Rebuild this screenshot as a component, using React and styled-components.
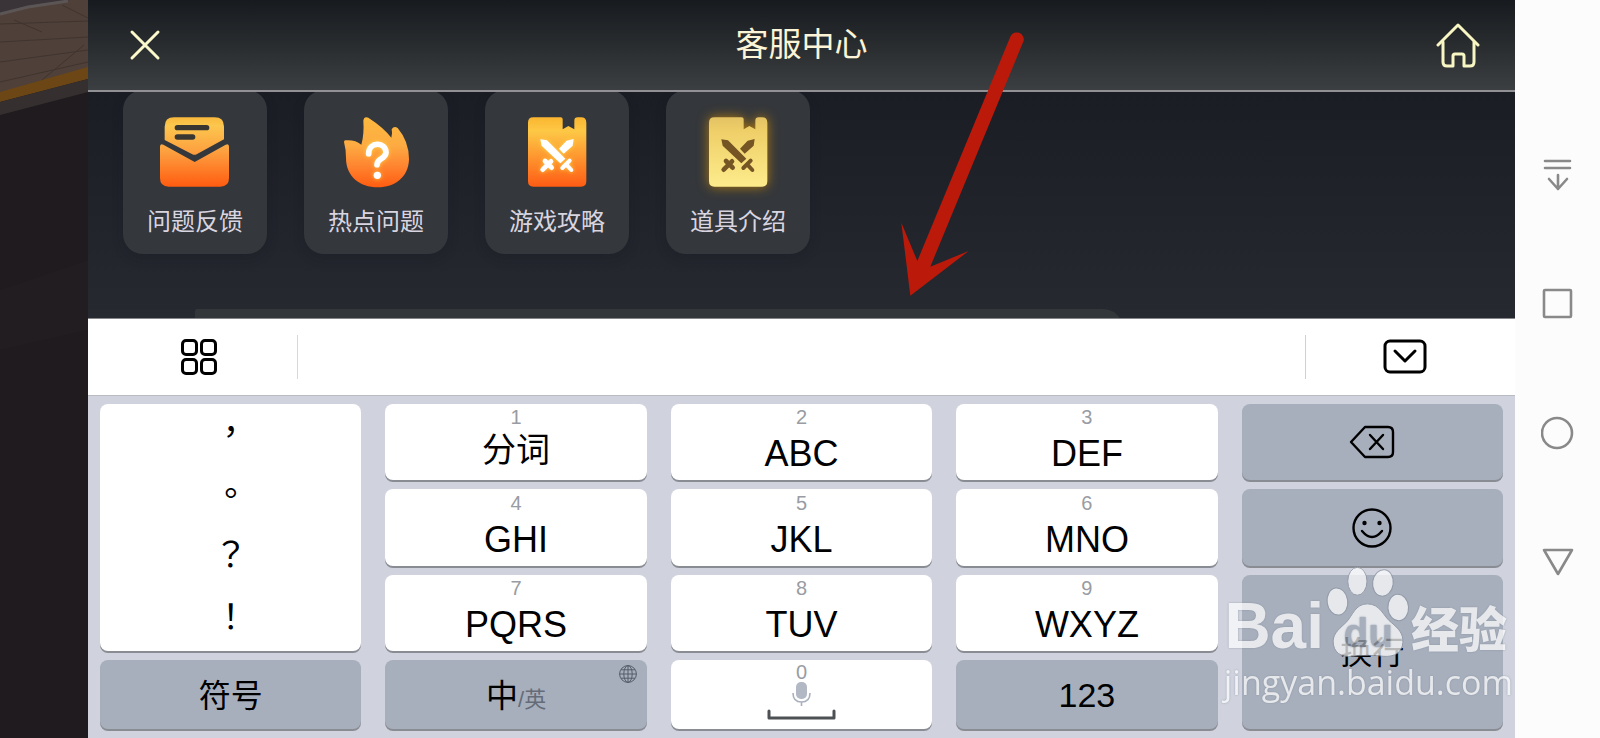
import React from "react";
import styled, { createGlobalStyle, css } from 'styled-components'

const keys = [
    { hint: '1', text: '分词', cn: true, area: 'k1' },
    { hint: '2', text: 'ABC', area: 'k2' },
    { hint: '3', text: 'DEF', area: 'k3' },
    { hint: '4', text: 'GHI', area: 'k4' },
    { hint: '5', text: 'JKL', area: 'k5' },
    { hint: '6', text: 'MNO', area: 'k6' },
    { hint: '7', text: 'PQRS', area: 'k7' },
    { hint: '8', text: 'TUV', area: 'k8' },
    { hint: '9', text: 'WXYZ', area: 'k9' },
]

const marks = ['，', '。', '？', '！']

const FeedbackIcon = () => (
    <CardIcon viewBox="477 348 216 216">
        <defs>
            <linearGradient id="mail" gradientUnits="userSpaceOnUse" x1="0" y1="352" x2="0" y2="560">
                <stop offset="0" stopColor="#f9b93c" />
                <stop offset="0.12" stopColor="#fcc74e" />
                <stop offset="0.5" stopColor="#fd9f3f" />
                <stop offset="1" stopColor="#ff5c10" />
            </linearGradient>
        </defs>
        <path fill="url(#mail)" d="M494 420V380Q494 352 522 352H644Q672 352 672 380V418L590 463Q583 466 577 463Z" />
        <path fill="url(#mail)" d="M480 440Q480 429 490 434L584 486L677 434Q687 429 687 440V534Q687 560 661 560H506Q480 560 480 534Z" />
        <path stroke="#3a3733" strokeWidth="16" strokeLinecap="round" d="M532 383H620M532 411H578" />
    </CardIcon>
)

const HotIcon = () => (
    <CardIcon viewBox="1018 346 216 216">
        <defs>
            <linearGradient id="fire" x1="0" y1="0" x2="0" y2="1">
                <stop offset="0" stopColor="#fcb93e" />
                <stop offset="0.4" stopColor="#fdab42" />
                <stop offset="0.7" stopColor="#ff8430" />
                <stop offset="1" stopColor="#ff5c10" />
            </linearGradient>
            <filter id="glow" x="-40%" y="-40%" width="180%" height="180%">
                <feDropShadow dx="0" dy="0" stdDeviation="7" floodColor="#ffd23e" />
            </filter>
        </defs>
        <path fill="url(#fire)" d="M1034 419Q1062 416 1082 432Q1091 400 1088 360Q1090 346 1103 351Q1148 380 1172 411Q1176 397 1173 386Q1180 374 1191 382Q1225 422 1225 476C1224 530 1182 560 1132 560C1076 560 1036 526 1036 472Q1036 446 1030 424Q1030 420 1034 419Z" />
        <g filter="url(#glow)">
            <path fill="none" stroke="#fff" strokeWidth="17" strokeLinecap="round" d="M1104 459C1104 422 1156 422 1156 456C1155 476 1129 472 1129 492" />
            <circle cx="1130" cy="524" r="11" fill="#fff" />
        </g>
    </CardIcon>
)

const BookIcon = ({ id, from, mid, to, sword, lit }) => (
    <CardIcon viewBox="180 108 216 216" $lit={lit}>
        <defs>
            <linearGradient id={id} x1="0" y1="0" x2="0" y2="1">
                <stop offset="0" stopColor={from} />
                <stop offset="0.2" stopColor={mid} />
                <stop offset="1" stopColor={to} />
            </linearGradient>
        </defs>
        <path fill={`url(#${id})`} d="M217 112H299Q305 112 305 118V148L322 138L340 148V122Q340 112 350 112H360Q376 112 376 128V304Q376 320 360 320H217Q201 320 201 304V128Q201 112 217 112Z" />
        <g filter={lit ? undefined : 'url(#glow)'}>
            <path fill={sword} d="M238 178L258 181L313 236L298 250L242 197ZM338 177L335 197L308 221L294 206L317 182Z" />
            <path stroke={sword} strokeWidth="12" strokeLinecap="round" d="M326 242L304 264M316 254L331 270" />
            <path stroke={sword} strokeWidth="14" strokeLinecap="round" d="M252 243L272 263M270 244L245 269" />
        </g>
    </CardIcon>
)

const PawIcon = () => (
    <Paw viewBox="370 80 261 280">
        <g fill="#fff" stroke="#8b93a0" strokeWidth="3">
            <ellipse cx="410" cy="187" rx="31" ry="41" transform="rotate(-8 410 187)" />
            <ellipse cx="470" cy="126" rx="29" ry="42" />
            <ellipse cx="547" cy="131" rx="31" ry="40" transform="rotate(8 547 131)" />
            <ellipse cx="593" cy="205" rx="31" ry="40" transform="rotate(-4 593 205)" />
            <path d="M500 194C540 194 548 232 572 250C596 270 608 284 607 310C605 342 580 354 550 352C520 348 486 348 456 352C420 356 397 340 397 306C398 280 420 266 438 248C456 228 464 194 500 194Z" />
        </g>
        <text x="503" y="324" textAnchor="middle" fontSize="122" fontWeight="700" fontFamily="Liberation Sans, sans-serif" fill="#a7afbd">du</text>
    </Paw>
)

const cards = [
    { name: '问题反馈', icon: <FeedbackIcon /> },
    { name: '热点问题', icon: <HotIcon /> },
    { name: '游戏攻略', icon: <BookIcon id="guide" from="#fbb62f" mid="#fdc846" to="#ff5c14" sword="#fff" /> },
    { name: '道具介绍', icon: <BookIcon id="props" from="#e3c264" mid="#efcf68" to="#fdec8c" sword="#765524" lit /> },
]

const App = () => {
    return (
        <Page>
            <Global />
            <Scene viewBox="0 0 88 738" preserveAspectRatio="none">
                <rect width="88" height="738" fill="#1f1b1f" />
                <path fill="#4f4039" d="M0 0H88V70L0 100Z" />
                <path fill="#3a3338" d="M0 0H70L40 4L0 14Z" />
                <path stroke="#5c5555" strokeWidth="3" d="M0 14L28 7L68 1" fill="none" />
                <path stroke="#40342f" fill="none" d="M0 24L88 21M0 42L88 37M0 62L88 50M0 82L88 62M14 20L42 32M62 5L88 18M84 45L42 80" />
                <path fill="#6c4715" d="M0 92L88 67V79L0 102Z" />
                <path fill="#35302f" d="M0 102L88 79V92L0 115Z" />
                <path fill="#211d20" d="M0 290L88 260V330L0 350Z" />
            </Scene>
            <Screen>
                <Header>
                    <HeaderButton aria-label="关闭">
                        <svg width="32" height="32" viewBox="0 0 32 32" stroke="#fcf9cc" strokeWidth="3" strokeLinecap="round">
                            <path d="M3 3L29 29M29 3L3 29" />
                        </svg>
                    </HeaderButton>
                    <Title>客服中心</Title>
                    <HeaderButton aria-label="主页">
                        <svg width="44" height="46" viewBox="0 0 44 46" fill="none" stroke="#f8f7c4" strokeWidth="3" strokeLinecap="round" strokeLinejoin="round">
                            <path d="M2 23L22 3L42 23" />
                            <path d="M7 20V40Q7 44 11 44H17V34Q17 32 19 32H26Q28 32 28 34V44H34Q38 44 38 40V20" />
                        </svg>
                    </HeaderButton>
                </Header>
                <Content>
                    <Cards>
                        {cards.map(el => (
                            <Card key={el.name}>
                                {el.icon}
                                <CardName>{el.name}</CardName>
                            </Card>
                        ))}
                    </Cards>
                    <MessageBox aria-label="消息" />
                </Content>
                <Toolbar>
                    <ToolButton aria-label="菜单" $side="left">
                        <svg width="36" height="36" viewBox="0 0 36 36" fill="none" stroke="#000" strokeWidth="3">
                            <rect x="1.5" y="1.5" width="14" height="14" rx="3.500" />
                            <rect x="20.5" y="1.5" width="14" height="14" rx="3.500" />
                            <rect x="1.5" y="20.5" width="14" height="14" rx="3.500" />
                            <rect x="20.5" y="20.5" width="14" height="14" rx="3.500" />
                        </svg>
                    </ToolButton>
                    <ToolButton aria-label="收起键盘" $side="right">
                        <svg width="44" height="36" viewBox="0 0 44 36" fill="none" stroke="#000" strokeWidth="3" strokeLinecap="round" strokeLinejoin="round">
                            <rect x="2" y="2" width="40" height="31" rx="5" />
                            <path d="M12 12L22 22L32 12" />
                        </svg>
                    </ToolButton>
                </Toolbar>
                <Keypad>
                    <MarkList>
                        {marks.map(el => <Mark key={el}>{el}</Mark>)}
                    </MarkList>
                    {keys.map(el => (
                        <Key key={el.area} $area={el.area}>
                            <Hint>{el.hint}</Hint>
                            <Letters $cn={el.cn}>{el.text}</Letters>
                        </Key>
                    ))}
                    <Key $area="del" $dark aria-label="删除">
                        <svg width="46" height="34" viewBox="0 0 46 34" fill="none" stroke="#000" strokeWidth="2.4" strokeLinecap="round" strokeLinejoin="round">
                            <path d="M16 2H39Q44 2 44 7V27Q44 32 39 32H16L2 17Z" />
                            <path d="M21 10L34 24M34 10L21 24" />
                        </svg>
                    </Key>
                    <Key $area="emo" $dark aria-label="表情">
                        <svg width="40" height="40" viewBox="0 0 40 40" fill="none" stroke="#000" strokeWidth="2.4" strokeLinecap="round">
                            <circle cx="20" cy="20" r="18.5" />
                            <path d="M10 23Q20 35 30 23" />
                            <circle cx="12.5" cy="15" r="2.2" fill="#000" stroke="none" />
                            <circle cx="27.5" cy="15" r="2.2" fill="#000" stroke="none" />
                        </svg>
                    </Key>
                    <Key $area="ent" $dark><KeyText>换行</KeyText></Key>
                    <Key $area="sym" $dark><KeyText>符号</KeyText></Key>
                    <Key $area="lang" $dark>
                        <LangRow>
                            <KeyText>中</KeyText><SmallText>/英</SmallText>
                        </LangRow>
                        <Globe viewBox="0 0 18 18">
                            <circle cx="9" cy="9" r="8.4" />
                            <ellipse cx="9" cy="9" rx="4.2" ry="8.4" />
                            <path d="M9 0.6V17.4M0.6 9H17.4M2 4.8H16M2 13.2H16" />
                        </Globe>
                    </Key>
                    <Key $area="spc" aria-label="空格">
                        <Hint $tight>0</Hint>
                        <SpaceIcon viewBox="0 0 69 46" fill="none">
                            <rect x="29" y="0" width="11" height="17" rx="5" fill="#b2b8c4" />
                            <path stroke="#a9b0bd" strokeWidth="1.6" d="M26 11Q26 20 34.500 20Q43 20 43 11M34.500 20V24" />
                            <path stroke="#4d5154" strokeWidth="3" strokeLinecap="round" strokeLinejoin="round" d="M2 29V36H67V29" />
                        </SpaceIcon>
                    </Key>
                    <Key $area="num" $dark><Digits>123</Digits></Key>
                </Keypad>
                <Arrow viewBox="180 90 378 801">
                    <path fill="#bb1a0b" d="M512 108A21 21 0 0 1 551 122L271 800L386 753L211 887L184 668L232 783Z" />
                </Arrow>
                <Watermark>
                    <BrandRow>
                        <Brand>Bai</Brand>
                        <PawIcon />
                        <BrandCn>经验</BrandCn>
                    </BrandRow>
                    <Site>jingyan.baidu.com</Site>
                </Watermark>
            </Screen>
            <NavBar>
                <NavButton aria-label="收起">
                    <NavIcon viewBox="0 0 34 34">
                        <path d="M4 3H29M4 10H29M17 17V31M8 21L17 31L26 21" />
                    </NavIcon>
                </NavButton>
                <NavButton aria-label="最近任务">
                    <NavIcon viewBox="0 0 34 34"><rect x="3" y="3" width="27" height="27" rx="1" /></NavIcon>
                </NavButton>
                <NavButton aria-label="主屏幕">
                    <NavIcon viewBox="0 0 34 34"><circle cx="16" cy="17" r="15" /></NavIcon>
                </NavButton>
                <NavButton aria-label="返回">
                    <NavIcon viewBox="0 0 34 34"><path d="M3 5H31L17 29Z" /></NavIcon>
                </NavButton>
            </NavBar>
        </Page>
    )
}

const Global = createGlobalStyle`
    * {
        box-sizing: border-box;
    }
    body {
        margin: 0;
        font-family: "Liberation Sans", "Noto Sans CJK SC", sans-serif;
    }
    button {
        border: 0;
        padding: 0;
        background: none;
        font-family: inherit;
        color: inherit;
        cursor: pointer;
    }
    svg {
        display: block;
    }
`;

const Page = styled.div`
    display: flex;
    height: 100vh;
    background: #1f1b1f;
`;

const Scene = styled.svg`
    width: 88px;
    height: 100%;
    flex: none;
`;

const Screen = styled.main`
    flex: 1;
    min-width: 0;
    position: relative;
    display: flex;
    flex-direction: column;
`;

const Header = styled.header`
    height: 92px;
    flex: none;
    padding: 0 35px;
    display: flex;
    align-items: center;
    justify-content: space-between;
    background: linear-gradient(#171a1e, #3c3f41);
    border-bottom: 2px solid #919095;
`;

const HeaderButton = styled.button`
    width: 44px;
    height: 46px;
    display: flex;
    align-items: center;
    justify-content: center;
`;

const Title = styled.h1`
    margin: 0;
    font-size: 33px;
    font-weight: 400;
    line-height: 48px;
    color: #fcf4d6;
`;

const Content = styled.section`
    flex: 1;
    min-height: 0;
    overflow: hidden;
    background: linear-gradient(#1b1d25, #262930);
`;

const Cards = styled.div`
    display: flex;
    gap: 37px;
    padding: 0 35px;
    margin-top: -2px;
`;

const Card = styled.button`
    width: 144px;
    height: 164px;
    display: flex;
    flex-direction: column;
    align-items: center;
    gap: 16px;
    padding-top: 26px;
    border-radius: 20px;
    background: #34373b;
    box-shadow: 0 4px 12px rgba(20, 22, 28, 0.2);
`;

const CardIcon = styled.svg`
    width: 72px;
    height: 72px;
    flex: none;
    overflow: visible;
    ${props => props.$lit && css`
        filter: drop-shadow(0 0 6px #b07a10);
    `}
`;

const CardName = styled.span`
    font-size: 24px;
    line-height: 36px;
    color: #d9d5e0;
`;

const MessageBox = styled.input`
    display: block;
    width: 65%;
    height: 60px;
    margin: 55px 0 0 107px;
    border: 0;
    border-radius: 2px 20px 20px 2px;
    background: #33373a;
    color: #d9d5e0;
`;

const Toolbar = styled.div`
    height: 78px;
    flex: none;
    display: flex;
    align-items: center;
    justify-content: space-between;
    background: #fff;
    border-top: 1px solid #85868a;
    border-bottom: 1px solid #b9bbc2;
`;

const ToolButton = styled.button`
    width: 210px;
    height: 44px;
    display: flex;
    align-items: center;
    justify-content: center;
    ${props => props.$side === 'left' ? css`
        padding-left: 12px;
        border-right: 1px solid #d8d8da;
    ` : css`
        padding-right: 12px;
        border-left: 1px solid #d0d0d2;
    `}
`;

const Keypad = styled.div`
    flex: none;
    display: grid;
    grid-template-columns: repeat(5, 1fr);
    grid-template-rows: 76px 77px 76px 69px;
    grid-template-areas:
        "mark k1 k2 k3 del"
        "mark k4 k5 k6 emo"
        "mark k7 k8 k9 ent"
        "sym lang spc num ent";
    gap: 9px 24px;
    padding: 8px 12px 9px;
    background: #d0d3de;
`;

const keyShape = css`
    border-radius: 8px;
    box-shadow: 0 2px 0 #898c93;
`;

const Key = styled.button`
    ${keyShape}
    grid-area: ${props => props.$area};
    position: relative;
    display: flex;
    flex-direction: column;
    align-items: center;
    justify-content: center;
    background: ${props => props.$dark ? '#a7afbd' : '#fff'};
    color: #000;
`;

const Hint = styled.span`
    height: ${props => props.$tight ? '20px' : '26px'};
    font-size: 20px;
    line-height: ${props => props.$tight ? '20px' : '26px'};
    color: #999ca2;
`;

const Letters = styled.span`
    height: 50px;
    font-size: ${props => props.$cn ? '34px' : '36px'};
    line-height: ${props => props.$cn ? '40px' : '48px'};
`;

const KeyText = styled.span`
    font-size: 32px;
    line-height: 48px;
    padding-top: 2px;
`;

const Digits = styled.span`
    font-size: 34px;
    line-height: 48px;
`;

const LangRow = styled.span`
    display: flex;
    align-items: baseline;
`;

const SmallText = styled.span`
    font-size: 22px;
    color: #656c78;
`;

const Globe = styled.svg`
    position: absolute;
    top: 5px;
    right: 10px;
    width: 18px;
    height: 18px;
    fill: none;
    stroke: #555c68;
`;

const SpaceIcon = styled.svg`
    width: 69px;
    height: 46px;
`;

const MarkList = styled.div`
    ${keyShape}
    grid-area: mark;
    display: flex;
    flex-direction: column;
    background: #fff;
`;

const Mark = styled.button`
    flex: 1;
    padding-bottom: 10px;
    font-family: "Noto Sans CJK TC", sans-serif;
    font-size: 34px;
    line-height: 48px;
`;

const Arrow = styled.svg`
    position: absolute;
    left: 812px;
    top: 30px;
    width: 126px;
    height: 267px;
    pointer-events: none;
`;

const Watermark = styled.div`
    position: absolute;
    right: 2px;
    bottom: 33px;
    color: #fff;
    opacity: 0.72;
    text-shadow: 0 0 2px #7d8592;
    pointer-events: none;
`;

const BrandRow = styled.div`
    display: flex;
    align-items: flex-end;
    justify-content: flex-end;
    padding-right: 6px;
`;

const Brand = styled.span`
    font-size: 64px;
    font-weight: 700;
    line-height: 66px;
`;

const Paw = styled.svg`
    width: 87px;
    height: 93px;
`;

const BrandCn = styled.span`
    font-size: 48px;
    font-weight: 900;
    line-height: 56px;
`;

const Site = styled.div`
    font-family: "Open Sans", sans-serif;
    font-size: 34px;
    line-height: 46px;
    text-align: right;
`;

const NavBar = styled.nav`
    width: 85px;
    flex: none;
    display: flex;
    flex-direction: column;
    justify-content: center;
    padding-bottom: 2px;
    background: #fcfcfc;
`;

const NavButton = styled.button`
    height: 129px;
    display: flex;
    align-items: center;
    justify-content: center;
`;

const NavIcon = styled.svg`
    width: 34px;
    height: 34px;
    fill: none;
    stroke: #898989;
    stroke-width: 2.6;
    stroke-linecap: round;
    stroke-linejoin: round;
`;

export default App;
